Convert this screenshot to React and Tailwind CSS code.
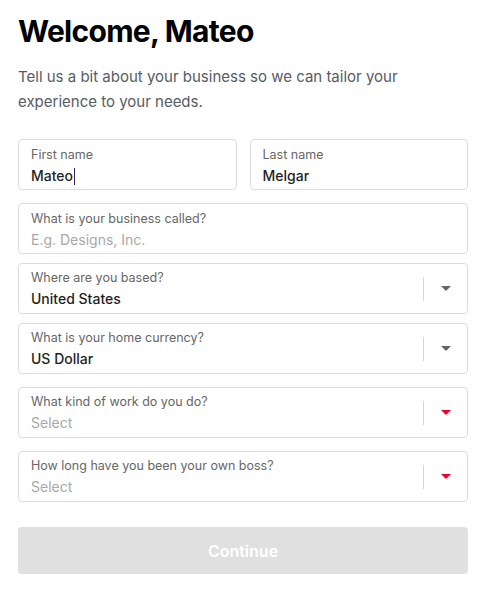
import React from 'react';

const font = { fontFamily: 'Inter, "Liberation Sans", sans-serif' };

function Caret({ red }) {
  return (
    <svg width="10" height="5" viewBox="0 0 10 5" className="block">
      <path d="M0 0 H10 L5 5 Z" fill={red ? '#f0002d' : '#666666'} />
    </svg>
  );
}

function TextField({ label, value, placeholder, cursor }) {
  return (
    <div className="h-[51px] rounded-[4px] border border-[#dcdcdc] bg-white px-[12px] pt-[7px]">
      <div className="text-[12.5px] leading-[16px] text-[#666666]">{label}</div>
      {value ? (
        <div className="mt-[3px] flex items-center text-[14px] leading-[20px] font-medium text-[#1f1f1f]">
          {value}
          {cursor && <span className="ml-[1px] inline-block h-[17px] w-[1px] bg-[#3b1f5a]" />}
        </div>
      ) : (
        <div className="mt-[3px] text-[14px] leading-[20px] text-[#a8a8a8]">{placeholder}</div>
      )}
    </div>
  );
}

function SelectField({ label, value, red }) {
  return (
    <div className="flex h-[51px] items-center rounded-[4px] border border-[#dcdcdc] bg-white pl-[12px]">
      <div className="flex-1 pt-[1px]">
        <div className="text-[12.5px] leading-[16px] text-[#666666]">{label}</div>
        {value ? (
          <div className="mt-[3px] text-[14px] leading-[20px] font-medium text-[#1f1f1f]">{value}</div>
        ) : (
          <div className="mt-[3px] text-[14px] leading-[20px] text-[#a8a8a8]">Select</div>
        )}
      </div>
      <div className="h-[24px] w-px bg-[#d6d6d6]" />
      <div className="flex w-[43px] justify-center pl-[1px]">
        <Caret red={red} />
      </div>
    </div>
  );
}

export default function App() {
  return (
    <div className="min-h-screen bg-white" style={font}>
      <div className="ml-[18px] w-[450px] pt-[11px]">
        <h1 className="text-[30px] leading-[40px] font-bold tracking-[-0.7px] text-black">
          Welcome, Mateo
        </h1>
        <p className="mt-[13px] text-[15px] leading-[25px] text-[#575b63]">
          Tell us a bit about your business so we can tailor your experience to your needs.
        </p>

        <div className="mt-[25px] flex flex-col">
          <div className="grid grid-cols-2 gap-[13px]">
            <TextField label="First name" value="Mateo" cursor />
            <TextField label="Last name" value="Melgar" />
          </div>
          <div className="mt-[13px]">
            <TextField label="What is your business called?" placeholder="E.g. Designs, Inc." />
          </div>
          <div className="mt-[9px]">
            <SelectField label="Where are you based?" value="United States" />
          </div>
          <div className="mt-[9px]">
            <SelectField label="What is your home currency?" value="US Dollar" />
          </div>
          <div className="mt-[13px]">
            <SelectField label="What kind of work do you do?" red />
          </div>
          <div className="mt-[13px]">
            <SelectField label="How long have you been your own boss?" red />
          </div>
          <button className="mt-[25px] h-[47px] w-full rounded-[4px] bg-[#e0e0e0] text-[16px] font-semibold text-white">
            Continue
          </button>
        </div>
      </div>
    </div>
  );
}
